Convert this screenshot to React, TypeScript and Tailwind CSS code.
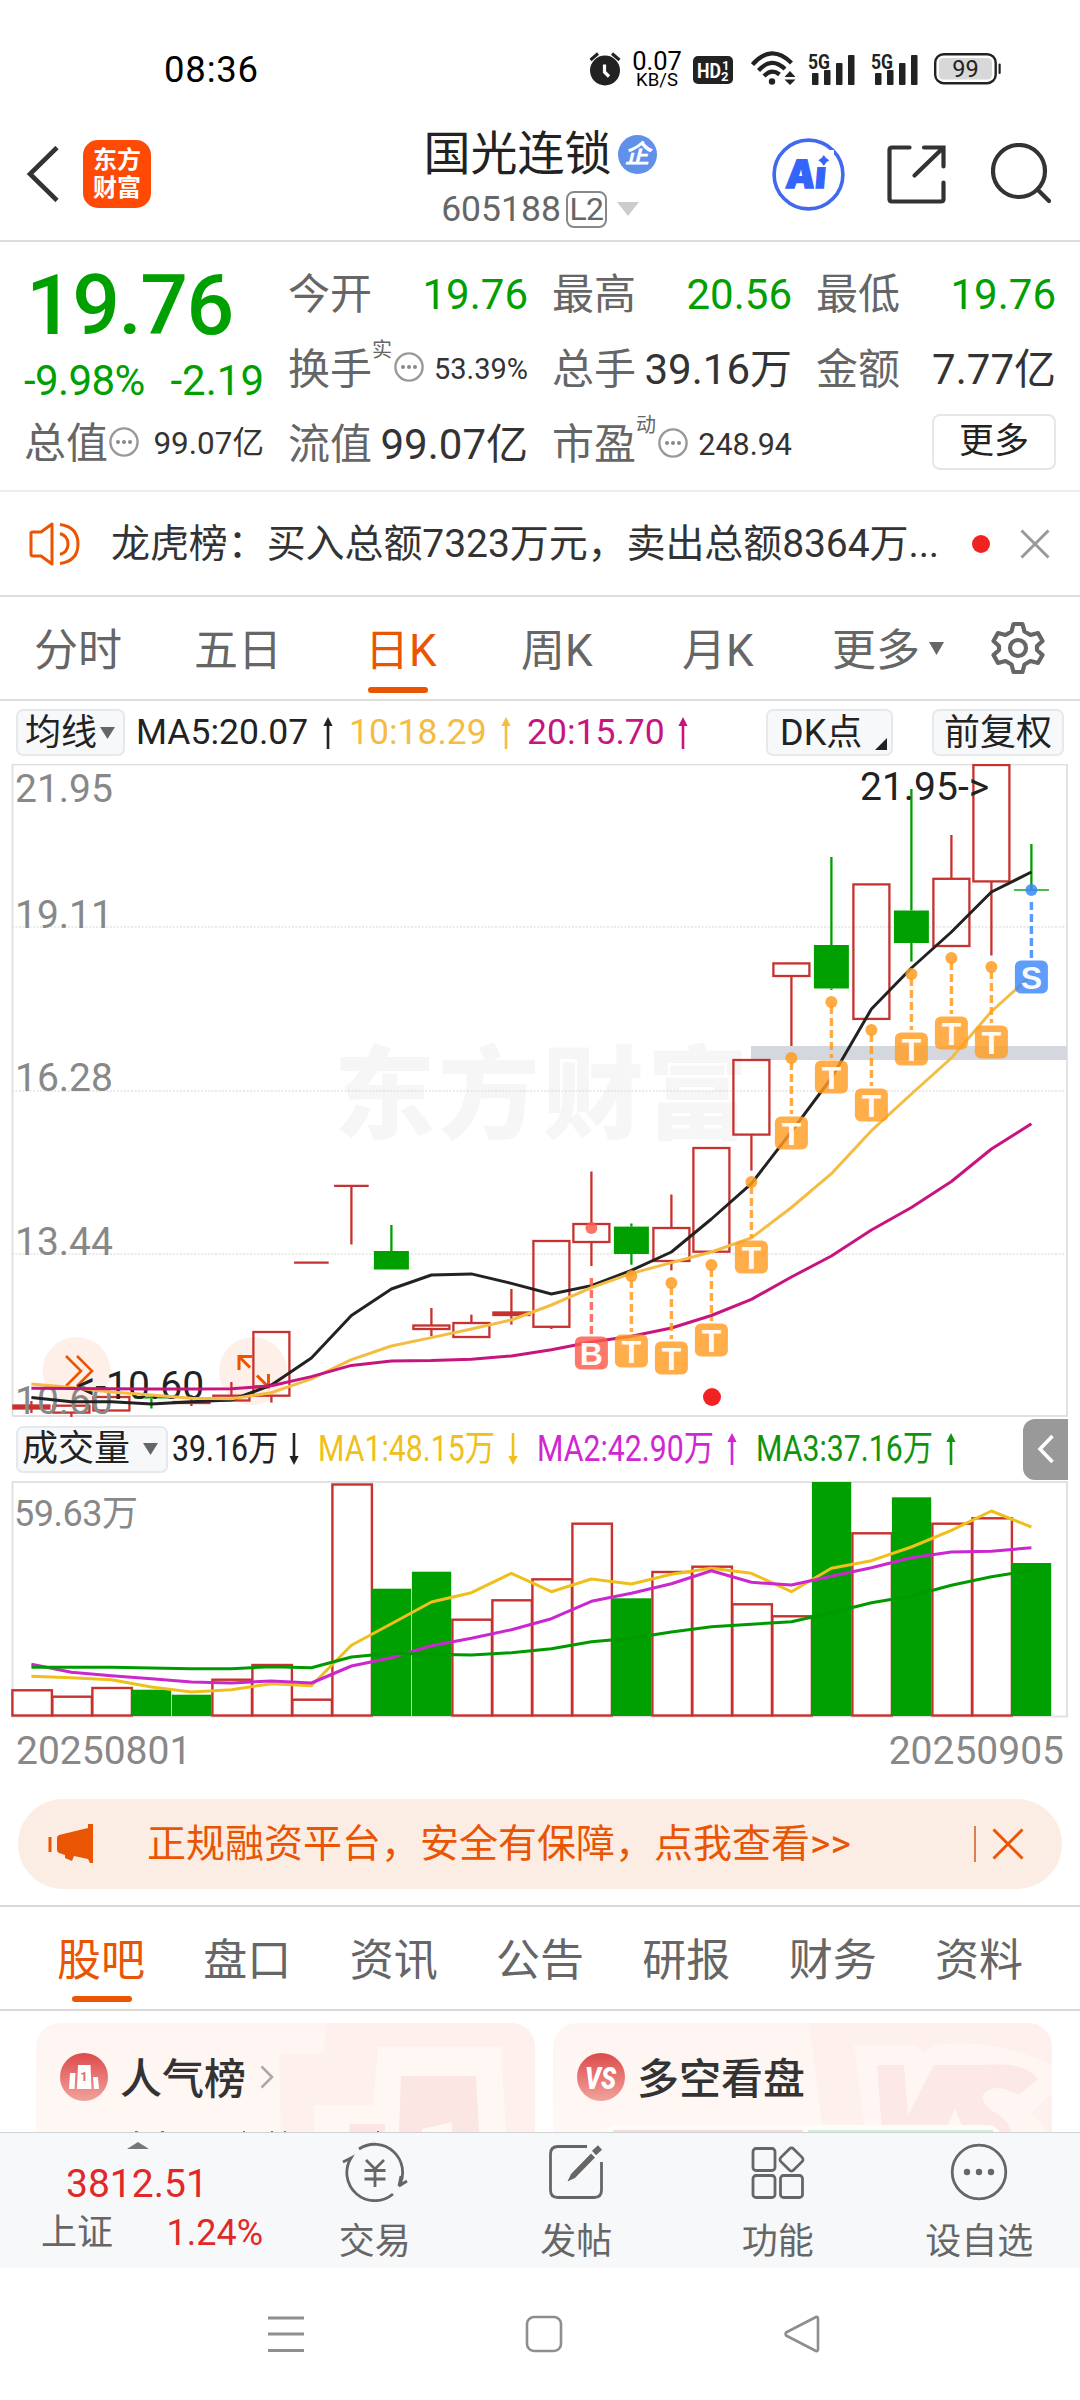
import React from "react";

const RED = "#c5322f";
const GREEN = "#00a000";
const ORANGE = "#ea5504";

const xAt = (i: number) => 31.4 + 40 * i;
const toPoints = (ys: number[]) => ys.map((y, i) => `${xAt(i).toFixed(1)},${y}`).join(" ");

/* ---------- data ---------- */

// [color, bodyTop, bodyBottom, wickTop, wickBottom]
type Candle = ["r" | "g", number, number, number, number];
const candles: Candle[] = [
  ["r", 1405.5, 1408.5, 1401, 1413],
  ["r", 1405.7, 1412.6, 1405.7, 1418],
  ["r", 1397, 1410.5, 1397, 1410.5],
  ["g", 1396.5, 1398.5, 1396, 1408.5],
  ["r", 1402, 1403, 1395, 1406],
  ["r", 1395.7, 1400.5, 1382, 1400.5],
  ["r", 1332, 1395.7, 1332, 1402.6],
  ["r", 1262.6, 1262.6, 1262.6, 1262.6],
  ["r", 1185.8, 1185.8, 1185.8, 1244.5],
  ["g", 1251, 1269.5, 1225, 1269.5],
  ["r", 1325.5, 1329, 1308, 1336],
  ["r", 1323, 1337, 1314.6, 1337],
  ["r", 1312.5, 1315, 1289, 1324.6],
  ["r", 1241, 1326.8, 1241, 1329],
  ["r", 1224, 1242, 1171.5, 1266],
  ["g", 1226.6, 1254, 1223.5, 1264.7],
  ["r", 1228, 1261, 1194.5, 1270.4],
  ["r", 1148, 1251.7, 1148, 1251.7],
  ["r", 1060, 1134.6, 1060, 1170.6],
  ["r", 963.4, 976, 963.4, 1046],
  ["g", 945, 988.5, 857, 990],
  ["r", 884.4, 1018.9, 884.4, 1018.9],
  ["g", 910.5, 943, 789, 961.6],
  ["r", 878.8, 946, 835, 946],
  ["r", 765, 881.4, 765, 955.5],
  ["g", 889.3, 890.7, 844, 890],
];

const ma5 = [1397.5, 1401.8, 1401.8, 1404, 1401.8, 1400, 1385, 1358, 1315.5, 1289, 1275, 1273.9, 1283.4, 1294, 1285.6, 1270.4, 1252, 1219, 1183.7, 1131.6, 1078, 1009, 968, 932, 892, 872];
const ma10 = [1384, 1387.5, 1392, 1395, 1398.3, 1398.7, 1392.7, 1378.8, 1359.7, 1346, 1337.6, 1329, 1320, 1305, 1287.7, 1273.4, 1262.6, 1252, 1237.9, 1207.5, 1173.7, 1130.7, 1094, 1058, 1011.5, 975.5];
const ma20 = [1388.3, 1388.5, 1388.7, 1389, 1389, 1388.8, 1385.7, 1376.6, 1365.4, 1361, 1360.6, 1359.3, 1356, 1349.7, 1342, 1336.3, 1328, 1315.5, 1299.4, 1277, 1256, 1230, 1207.5, 1181.5, 1149, 1123.8];

// [candle index, dot y]
const tMarks: [number, number][] = [
  [15, 1276], [16, 1283], [17, 1265], [18, 1182], [19, 1058],
  [20, 1002], [21, 1030], [22, 974], [23, 958], [24, 967],
];

const volumes: ["r" | "g", number][] = [
  ["r", 1689.3], ["r", 1695.7], ["r", 1687], ["g", 1688.7], ["g", 1693.7], ["r", 1678.7], ["r", 1664],
  ["r", 1698.7], ["r", 1483.5], ["g", 1587.7], ["g", 1570.7], ["r", 1618.7], ["r", 1599.3], ["r", 1578.3],
  ["r", 1522.7], ["g", 1597.3], ["r", 1571], ["r", 1565.7], ["r", 1603.3], ["r", 1615.3], ["g", 1481],
  ["r", 1532.3], ["g", 1496.3], ["r", 1522.7], ["r", 1517.3], ["g", 1562],
];
const volY = (v: number[]) => v.map((p) => Math.round((1410 + p / 3) * 10) / 10);
const v1 = volY([796, 800, 806, 828, 843, 836, 818, 824, 703, 638, 573, 545, 487, 542, 504, 519, 490, 472, 487, 542, 472, 449, 408, 358, 300, 348]);
const v2 = volY([760, 784, 794, 803, 813, 816, 810, 816, 765, 740, 704, 682, 656, 623, 571, 547, 518, 479, 514, 522, 496, 470, 440, 423, 421, 410]);
const v3 = volY([769, 769, 769, 771, 773, 773, 767, 770, 738, 727, 730, 732, 725, 713, 692, 682, 663, 647, 640, 632, 605, 575, 555, 523, 497, 478]);

/* ---------- small pieces ---------- */

function Arrow({ color, down = false, className = "" }: { color: string; down?: boolean; className?: string }) {
  return (
    <svg width="10" height="34" viewBox="0 0 10 34" className={`shrink-0 ${className}`}>
      <g transform={down ? "rotate(180 5 17)" : undefined}>
        <path d="M5 6V33" stroke={color} strokeWidth="2.6" />
        <path d="M5 1L9.6 10H0.4Z" fill={color} />
      </g>
    </svg>
  );
}

function Caret({ w, h, color, className = "" }: { w: number; h: number; color: string; className?: string }) {
  return (
    <svg width={w} height={h} viewBox="0 0 10 10" preserveAspectRatio="none" className={`shrink-0 ${className}`}>
      <path d="M0 0H10L5 10Z" fill={color} />
    </svg>
  );
}

function Hint({ className = "" }: { className?: string }) {
  return (
    <svg width="30" height="30" viewBox="0 0 30 30" className={`shrink-0 ${className}`}>
      <circle cx="15" cy="15" r="13.6" fill="none" stroke="#999" strokeWidth="2.4" />
      <g fill="#888">
        <circle cx="9" cy="15" r="2" />
        <circle cx="15" cy="15" r="2" />
        <circle cx="21" cy="15" r="2" />
      </g>
    </svg>
  );
}

function Signal() {
  return (
    <svg width="47" height="34" viewBox="0 0 47 34" className="shrink-0">
      <text x="0" y="17.5" fontSize="21" fontWeight="700" textLength="22" lengthAdjust="spacingAndGlyphs" fill="#222">5G</text>
      <g fill="#222">
        <rect x="4" y="22" width="6.5" height="12" rx="1" />
        <rect x="16" y="19" width="6.5" height="15" rx="1" />
        <rect x="28" y="12" width="6.5" height="22" rx="1" />
        <rect x="40" y="4" width="6.5" height="30" rx="1" />
      </g>
    </svg>
  );
}

/* ---------- sections ---------- */

function StatusBar() {
  return (
    <div className="flex h-[120px] shrink-0 items-start pl-[164px] pr-[78px]">
      <div className="mt-[50px] h-10 text-[36.5px] leading-10 tracking-[0.8px] text-black">08:36</div>
      <div className="mt-[50px] ml-auto flex h-9 items-start text-[#222]">
        <svg width="34" height="36" viewBox="0 0 34 36" className="shrink-0">
          <circle cx="17" cy="20.5" r="15" fill="#222" />
          <path d="M2.5 10L10 3.5M31.5 10L24 3.5" stroke="#222" strokeWidth="3" />
          <path d="M16.5 14.5V22L21 26.5" stroke="#fff" strokeWidth="3.2" fill="none" />
        </svg>
        <div className="ml-[9px] flex w-[52px] flex-col items-center text-black">
          <div className="h-[22px] text-[25.5px] leading-[22px]">0.07</div>
          <div className="h-[16px] text-[18.5px] leading-4">KB/S</div>
        </div>
        <svg width="40" height="28" viewBox="0 0 40 28" className="mt-[6px] ml-[10px] shrink-0">
          <rect width="40" height="28" rx="5" fill="#222" />
          <text x="4" y="21.5" fontSize="21" fontWeight="700" textLength="24" lengthAdjust="spacingAndGlyphs" fill="#fff">HD</text>
          <text x="29" y="13.5" fontSize="13" fontWeight="700" fill="#fff">1</text>
          <text x="28" y="25" fontSize="13" fontWeight="700" fill="#fff">2</text>
        </svg>
        <svg width="45" height="34" viewBox="0 0 45 34" className="mt-[1px] ml-[18px] shrink-0">
          <g fill="none" stroke="#222" strokeWidth="4.2">
            <path d="M1.5 13.5Q20.500 -8 40.500 12" />
            <path d="M7.500 19.500Q20.500 5 34 18" />
            <path d="M13 25Q20.500 17 28.500 23.500" />
          </g>
          <circle cx="21" cy="30.500" r="3.200" fill="#222" />
          <path d="M33.500 26L39 20L44.500 26ZM33.500 28.500L39 34L44.500 28.500Z" fill="#222" />
        </svg>
        <div className="mt-[1px] ml-[12px] flex gap-4">
          <Signal />
          <Signal />
        </div>
        <svg width="68" height="32" viewBox="0 0 68 32" className="mt-[3px] ml-[16px] shrink-0">
          <rect x="1.200" y="1.200" width="60.500" height="29" rx="8.500" fill="#fff" stroke="#222" strokeWidth="2.400" />
          <rect x="5" y="5" width="53" height="21.500" rx="4.500" fill="#d8d8d8" />
          <rect x="64.500" y="10.500" width="2.200" height="10.500" rx="1" fill="#222" />
          <text x="31.500" y="23.500" fontSize="23.500" textAnchor="middle" fill="#222">99</text>
        </svg>
      </div>
    </div>
  );
}

function Header() {
  return (
    <div className="grid h-[122px] shrink-0 grid-cols-3 items-center border-b-2 border-[#dcdcdc]">
      <div className="mt-[-12px] flex items-center pl-[26px]">
        <svg width="34" height="56" viewBox="0 0 34 56">
          <path d="M31 1.500L4 28L31 54.500" fill="none" stroke="#333" strokeWidth="4.600" />
        </svg>
        <div className="ml-[23px] flex h-[68px] w-[68px] flex-col items-center justify-center rounded-[15px] bg-[#ff4a05] text-[24px] font-bold leading-[28px] text-white">
          <span>东方</span>
          <span>财富</span>
        </div>
      </div>
      <div className="flex flex-col items-center">
        <div className="mt-[-1px] flex h-[60px] items-center text-[47px] leading-[60px] text-[#222]">
          <span>国光连锁</span>
          <span className="ml-[6px] flex h-[39px] w-[39px] items-center justify-center rounded-full bg-[#6090ea] text-[26px] font-bold italic leading-none text-white">企</span>
        </div>
        <div className="mt-[-1px] flex h-[52px] items-center text-[35.500px] leading-[52px] text-[#666]">
          <span>605188</span>
          <span className="ml-[5px] flex h-[37px] w-[41px] items-center justify-center rounded-[8px] border-2 border-[#888] text-[32px] leading-none tracking-tight">L2</span>
          <Caret w={22} h={14} color="#ccc" className="ml-[10px]" />
        </div>
      </div>
      <div className="mt-[-12px] flex items-center justify-end pr-[27px]">
        <svg width="73" height="73" viewBox="0 0 73 73">
          <circle cx="36.500" cy="36.500" r="34.400" fill="none" stroke="#4169ee" strokeWidth="3.600" />
          <g transform="skewX(-5)">
            <text x="17.500" y="50" fontSize="39" fontWeight="900" textLength="40" lengthAdjust="spacingAndGlyphs" fontFamily="Inter, Roboto, sans-serif" fill="#3465fa" stroke="#3465fa" strokeWidth="1.400">Ai</text>
          </g>
          <rect x="42" y="12" width="20" height="17" fill="#fff" />
          <path d="M51.800 17Q53.500 20.600 57.300 22.300Q53.500 24 51.800 27.800Q50 24 46.300 22.300Q50 20.600 51.800 17Z" fill="#3465fa" />
        </svg>
        <svg width="60" height="60" viewBox="0 0 60 60" className="ml-[42px]" fill="none" stroke="#333" strokeWidth="4.200" strokeLinecap="round">
          <path d="M22.500 3.500H5Q2.500 3.500 2.500 6V55Q2.500 57.500 5 57.500H54Q56.500 57.500 56.500 55V38.500" />
          <path d="M37 3.500H56.500V22.500M56 4L27.500 31.500" />
        </svg>
        <svg width="62" height="62" viewBox="0 0 62 62" className="ml-[44px]" fill="none" stroke="#333" strokeWidth="4.200" strokeLinecap="round">
          <circle cx="28" cy="28" r="26" />
          <path d="M46.500 46.500L58 58" />
        </svg>
      </div>
    </div>
  );
}

function Quote() {
  const label = "text-[42px] text-[#666]";
  return (
    <div className="grid h-[250px] shrink-0 grid-cols-[240px_240px_240px_240px] gap-x-6 border-b-2 border-[#ededed] px-6 pt-[15px] text-[42px] text-[#333]">
      <div className="flex flex-col text-[#00a000]">
        <div className="h-[98px] pl-[2px] text-[84px] font-medium leading-[98px] tracking-[-1.500px]">19.76</div>
        <div className="flex h-[51px] justify-between leading-[51px]">
          <span className="tracking-[-0.600px]">-9.98%</span>
          <span>-2.19</span>
        </div>
        <div className="flex h-[75px] items-center">
          <span className={label}>总值</span>
          <Hint className="ml-px mt-[-4px]" />
          <span className="ml-auto text-[31.500px] text-[#333]">99.07亿</span>
        </div>
      </div>
      <div>
        <div className="flex h-[75px] items-center justify-between">
          <span className={label}>今开</span>
          <span className="text-[#00a000]">19.76</span>
        </div>
        <div className="flex h-[75px] items-center">
          <span className={label}>换手</span>
          <span className="mt-[7px] self-start text-[20px] leading-[22px] text-[#666]">实</span>
          <Hint className="ml-[2px] mt-[-6px]" />
          <span className="ml-auto text-[29px]">53.39%</span>
        </div>
        <div className="flex h-[75px] items-center justify-between">
          <span className={label}>流值</span>
          <span>99.07亿</span>
        </div>
      </div>
      <div>
        <div className="flex h-[75px] items-center justify-between">
          <span className={label}>最高</span>
          <span className="text-[#00a000]">20.56</span>
        </div>
        <div className="flex h-[75px] items-center justify-between">
          <span className={label}>总手</span>
          <span>39.16万</span>
        </div>
        <div className="flex h-[75px] items-center">
          <span className={label}>市盈</span>
          <span className="mt-[7px] self-start text-[20px] leading-[22px] text-[#666]">动</span>
          <Hint className="ml-[2px] mt-[-4px]" />
          <span className="ml-auto text-[30.500px]">248.94</span>
        </div>
      </div>
      <div>
        <div className="flex h-[75px] items-center justify-between">
          <span className={label}>最低</span>
          <span className="text-[#00a000]">19.76</span>
        </div>
        <div className="flex h-[75px] items-center justify-between">
          <span className={label}>金额</span>
          <span>7.77亿</span>
        </div>
        <div className="flex h-[75px] items-center justify-end">
          <span className="mt-[-5px] flex h-[56px] w-[124px] items-center justify-center rounded-[8px] border-2 border-[#e6e6e6] text-[35px] text-[#222]">更多</span>
        </div>
      </div>
    </div>
  );
}

function Notice() {
  return (
    <div className="flex h-[105px] shrink-0 items-center border-b-2 border-[#dcdcdc] text-[39px] text-[#333]">
      <svg width="54" height="44" viewBox="0 0 54 44" className="ml-[29px] shrink-0" fill="none" stroke={ORANGE} strokeWidth="3">
        <path d="M2 11Q2 10 4 10H12L23 2V42L12 34H4Q2 34 2 32Z" strokeLinejoin="round" />
        <path d="M31 11.500Q39 14 39 22Q39 30 31 32.500M31 2.500Q49 5 49 22Q49 39 31 41.500" />
      </svg>
      <span className="ml-[28px] mt-px whitespace-nowrap tracking-[-0.080px]">龙虎榜：买入总额7323万元，卖出总额8364万...</span>
      <span className="ml-auto h-[18px] w-[18px] rounded-full bg-[#f22222]" />
      <svg width="30" height="30" viewBox="0 0 30 30" className="ml-[30px] mr-[30px] shrink-0">
        <path d="M1.500 1.500L28.500 28.500M28.500 1.500L1.500 28.500" stroke="#999" strokeWidth="3" />
      </svg>
    </div>
  );
}

function PeriodTabs() {
  return (
    <div className="flex h-[104px] shrink-0 items-center border-b-2 border-[#dcdcdc] pt-[6px] text-[44px] text-[#666]">
      <span className="ml-[34px] w-[160px]">分时</span>
      <span className="w-[171px]">五日</span>
      <span className="relative w-[156px] text-[#ea5504]">
        日K
        <span className="absolute bottom-[-9px] left-[3px] h-[6px] w-[60px] rounded-full bg-[#ea5504]" />
      </span>
      <span className="w-[161px]">周K</span>
      <span className="w-[150px]">月K</span>
      <span>更多</span>
      <Caret w={15} h={13} color="#666" className="ml-[9px] mt-[-6px]" />
      <svg width="54" height="54" viewBox="0 0 54 54" className="mt-[-6px] ml-auto mr-[35px]" fill="none" stroke="#666" strokeWidth="4.200">
        <path d="M22.500 3H31.500L33.500 10.500L39.500 14L47 12L51.500 20L46 25V29L51.500 34L47 42L39.500 40L33.500 43.500L31.500 51H22.500L20.500 43.500L14.500 40L7 42L2.500 34L8 29V25L2.500 20L7 12L14.500 14L20.500 10.500Z" strokeLinejoin="round" />
        <circle cx="27" cy="27" r="8" />
      </svg>
    </div>
  );
}

const chip = "flex items-center rounded-[7px] border-2 border-[#e6e8ec] bg-[#f7f8fa] text-[#222]";

function MaRow() {
  return (
    <div className="flex h-[63px] shrink-0 items-center whitespace-nowrap pr-[16px] text-[36px] leading-none">
      <div className={`${chip} ml-[16px] h-[47px] w-[109px] pl-[7px]`}>
        <span>均线</span>
        <Caret w={15} h={12} color="#666" className="ml-[3px]" />
      </div>
      <span className="ml-[11px] w-[174px] text-[35.500px] text-[#222]">MA5:20.07</span>
      <Arrow color="#222" className="ml-[13px]" />
      <span className="ml-[16px] w-[139px] text-[35.500px] text-[#f5bc42]">10:18.29</span>
      <Arrow color="#f5bc42" className="ml-[13px]" />
      <span className="ml-[16px] w-[139px] text-[35.500px] text-[#c7157f]">20:15.70</span>
      <Arrow color="#c7157f" className="ml-[12px]" />
      <div className={`${chip} relative ml-auto h-[47px] w-[127px] pl-[12px]`}>
        <span>DK点</span>
        <svg width="12" height="12" viewBox="0 0 12 12" className="absolute right-[4px] bottom-[4px]">
          <path d="M12 0V12H0Z" fill="#222" />
        </svg>
      </div>
      <div className={`${chip} ml-[39px] h-[47px] w-[132px] justify-center`}>前复权</div>
    </div>
  );
}

function Marker({ x, dotY, letter, color, dash }: { x: number; dotY: number; letter: string; color: string; dash?: [number, number] }) {
  const cy = letter === "S" ? 977 : letter === "B" ? 1353 : dotY + 75;
  const [a, b] = dash ?? [dotY + 4, cy - 19];
  return (
    <g>
      <path d={`M${x} ${a}V${b}`} stroke={color} strokeWidth="3.400" strokeDasharray="8 4" opacity="0.85" />
      <circle cx={x} cy={dotY} r="6" fill={color} opacity="0.85" />
      <rect x={x - 16.500} y={cy - 16.500} width="33" height="33" rx="6" fill={color} opacity="0.82" />
      <text x={x} y={cy + 11.500} fontSize="32" fontWeight="700" textAnchor="middle" fill="#fff" opacity="0.95" fontFamily="'Liberation Sans', Roboto, sans-serif">{letter}</text>
    </g>
  );
}

function PriceChart() {
  return (
    <svg width="1080" height="653" viewBox="0 764 1080 653" className="block shrink-0">
      <g fontSize="101" fontWeight="900" fill="#f6f6f6" fontFamily="'Noto Sans CJK SC', sans-serif">
        <text x="334" y="1131" textLength="414">东方财富</text>
      </g>
      <g stroke="#d6d6d6" strokeWidth="1.200" strokeDasharray="2 1.500">
        <path d="M12 927H1067M12 1091H1067M12 1254H1067" />
      </g>
      <rect x="12.500" y="764.500" width="1054.500" height="651.500" fill="none" stroke="#dfdfdf" strokeWidth="1.800" />
      <g>
        <circle cx="76.500" cy="1371" r="34" fill="#feefe8" />
        <path d="M66 1356L81 1371L66 1386M77 1356L92 1371L77 1386" fill="none" stroke={ORANGE} strokeWidth="2.600" />
        <circle cx="253" cy="1371" r="34" fill="#feefe8" />
      </g>
      <rect x="751" y="1046" width="316" height="14" fill="#d4d7dd" />
      {candles.map(([c, t, b, wt, wb], i) => {
        const x = xAt(i);
        const color = c === "r" ? RED : GREEN;
        const w = i === 25 || i === 7 || i === 8 ? 17.300 : 18;
        return (
          <g key={i} stroke={color} strokeWidth="2.300">
            {wt < t && <path d={`M${x} ${wt}V${t}`} />}
            {wb > b && <path d={`M${x} ${b}V${wb}`} />}
            {b - t < 1 ? (
              <path d={`M${x - w} ${t}H${x + w}`} />
            ) : c === "g" ? (
              <rect x={x - 17.500} y={t} width="35" height={b - t} fill={color} stroke="none" />
            ) : (
              <rect x={x - w} y={t} width={w * 2} height={b - t} fill={b - t < 3.200 ? color : "none"} />
            )}
          </g>
        );
      })}
      <g fill="none" stroke={ORANGE} strokeWidth="3">
        <path d="M239 1370V1356.500H252M240 1357.500L250 1367.500" />
        <path d="M268.500 1374V1387H255M267.500 1386L257 1375.500" />
      </g>
      <g fill="#888" fontSize="39">
        <text x="15" y="802">21.95</text>
        <text x="15" y="928">19.11</text>
        <text x="15" y="1091">16.28</text>
        <text x="15" y="1255">13.44</text>
        <text x="15" y="1414">10.60</text>
      </g>
      <g fontSize="39" fill="#222">
        <text x="75.500" y="1399">&lt;-10.60</text>
        <text x="860" y="800">21.95-&gt;</text>
      </g>
      <g fill="none" strokeWidth="3" strokeLinejoin="round">
        <polyline points={toPoints(ma5)} stroke="#222" />
        <polyline points={toPoints(ma10)} stroke="#f5bc42" />
        <polyline points={toPoints(ma20)} stroke="#c7157f" />
      </g>
      {tMarks.map(([i, y]) => (
        <Marker key={i} x={xAt(i)} dotY={y} letter="T" color="#ff9c22" />
      ))}
      <Marker x={xAt(14)} dotY={1228} letter="B" color="#fc5a4c" dash={[1278, 1334]} />
      <Marker x={xAt(25)} dotY={890} letter="S" color="#3b88f8" dash={[902, 958]} />
      <circle cx="712" cy="1397" r="9" fill="#f22222" />
    </svg>
  );
}

function VolItem({ text, color, down, cls }: { text: string; color: string; down?: boolean; cls: string }) {
  return (
    <>
      <span className={`${cls} shrink-0`} style={{ color }}>
        <span className="inline-block origin-left scale-x-[0.84]">{text}</span>
      </span>
      <Arrow color={color} down={down} />
    </>
  );
}

function VolumeRow() {
  return (
    <div className="flex h-[64px] shrink-0 items-center whitespace-nowrap text-[36px] leading-none">
      <div className={`${chip} ml-[16px] h-[47px] w-[152px] shrink-0 pl-[4px]`}>
        <span>成交量</span>
        <Caret w={15} h={12} color="#666" className="ml-[13px]" />
      </div>
      <VolItem text="39.16万" color="#222" down cls="ml-[4px] w-[117px]" />
      <VolItem text="MA1:48.15万" color="#f0bf1a" down cls="ml-[19px] w-[190px]" />
      <VolItem text="MA2:42.90万" color="#cf28d3" cls="ml-[19px] w-[190px]" />
      <VolItem text="MA3:37.16万" color="#109410" cls="ml-[19px] w-[190px]" />
      <div className="ml-auto mr-[12px] flex h-[61px] w-[45px] items-center justify-center rounded-l-[12px] bg-[#999]">
        <svg width="18" height="30" viewBox="0 0 18 30">
          <path d="M15.500 2L3 15L15.500 28" fill="none" stroke="#fff" strokeWidth="3.600" />
        </svg>
      </div>
    </div>
  );
}

function VolumeChart() {
  return (
    <svg width="1080" height="237" viewBox="0 1480 1080 237" className="block shrink-0">
      <rect x="12.500" y="1481" width="1054.500" height="234.500" fill="none" stroke="#dfdfdf" strokeWidth="1.800" />
      {volumes.map(([c, top], i) => {
        const x = xAt(i);
        return c === "g" ? (
          <rect key={i} x={x - 19.500} y={top} width="39.300" height={1715 - top} fill={GREEN} />
        ) : (
          <rect key={i} x={x - 19} y={top} width="39.500" height={1714.500 - top} fill="#fff" stroke={RED} strokeWidth="2.400" />
        );
      })}
      <text x="14" y="1524.500" fontSize="36" textLength="124" fill="#888">59.63万</text>
      <g fill="none" strokeWidth="3" strokeLinejoin="round">
        <polyline points={toPoints(v1)} stroke="#efc01c" />
        <polyline points={toPoints(v2)} stroke="#cb27cf" />
        <polyline points={toPoints(v3)} stroke="#009a00" />
      </g>
    </svg>
  );
}

function Banner() {
  return (
    <div className="mx-[18px] mt-[17px] flex h-[90px] shrink-0 items-center rounded-full bg-[#fcede4] text-[39px] text-[#ea5504]">
      <svg width="46" height="40" viewBox="0 0 46 40" className="ml-[30px] shrink-0" fill={ORANGE}>
        <rect x="0.500" y="13" width="3" height="15" />
        <path d="M9 14Q9 12 11 11L40 4V0H45V39H42L40 35L26 32L24 37L17 34V31L11 29Q9 28 9 26Z" />
      </svg>
      <span className="ml-[53px] mt-px whitespace-nowrap">正规融资平台，安全有保障，点我查看&gt;&gt;</span>
      <span className="ml-auto h-[36px] w-[2px] bg-[#d9824f]" />
      <svg width="32" height="32" viewBox="0 0 32 32" className="ml-[16px] mr-[38px] shrink-0">
        <path d="M1.500 1.500L30.500 30.500M30.500 1.500L1.500 30.500" stroke={ORANGE} strokeWidth="3" />
      </svg>
    </div>
  );
}

function SectionTabs() {
  const tabs = ["股吧", "盘口", "资讯", "公告", "研报", "财务", "资料"];
  return (
    <div className="mt-[16px] flex h-[106px] shrink-0 items-center justify-between border-y-2 border-[#d9d9d9] px-[57px] pt-[6px] text-[44px] text-[#666]">
      {tabs.map((t, i) => (
        <span key={t} className={i === 0 ? "relative text-[#ea5504]" : ""}>
          {t}
          {i === 0 && <span className="absolute bottom-[-8px] left-[15px] h-[6px] w-[60px] rounded-full bg-[#ea5504]" />}
        </span>
      ))}
    </div>
  );
}

function Cards() {
  return (
    <div className="flex h-[121px] shrink-0 justify-center gap-[18px] overflow-hidden pt-[12px] pl-2">
      <div className="relative h-[160px] w-[499px] overflow-hidden rounded-[24px] bg-linear-to-b from-[#fef5f2] to-[#fff9f6]">
        <svg width="499" height="109" viewBox="0 0 499 109" className="absolute top-0 left-0">
          <path d="M290 0H499V109H245L243 31H288Z" fill="#fdf0ed" />
          <path d="M278 82H337L342 24H465L470 109H278Z" fill="#fff7f4" />
          <path d="M365 53H440L443 109H363ZM314 101H349V109H313Z" fill="#fce6e4" />
          <path d="M386 106L416 99V109H386Z" fill="#fff7f4" />
          <path d="M99 108.500h3M125 108.500h3M207 108.500h2M235 108.500h2M248 108.500h2M341 108.500h2" stroke="#777" />
        </svg>
        <div className="relative flex h-[108px] items-center pl-6">
          <svg width="48" height="48" viewBox="0 0 48 48">
            <defs>
              <linearGradient id="badge" x1="0" y1="0" x2="0" y2="1">
                <stop offset="0" stopColor="#dc4b4b" />
                <stop offset="1" stopColor="#f1a29d" />
              </linearGradient>
            </defs>
            <circle cx="24" cy="24" r="24" fill="url(#badge)" />
            <path d="M10 20H15.500L14.500 36H9ZM18 12H30.500L31.500 36H17ZM33 24H38L39 36H34Z" fill="#fff" />
            <text x="24" y="28" fontSize="13" fontWeight="700" textAnchor="middle" fill="#e16a66">1</text>
          </svg>
          <span className="mt-[5px] ml-[12px] text-[42px] font-medium text-[#333]">人气榜</span>
          <svg width="14" height="24" viewBox="0 0 14 24" className="ml-[14px]">
            <path d="M1.500 1.500L12 12L1.500 22.500" fill="none" stroke="#aaa" strokeWidth="2.600" />
          </svg>
        </div>
      </div>
      <div className="relative h-[160px] w-[499px] overflow-hidden rounded-[24px] bg-linear-to-b from-[#fef5f2] to-[#fff9f6]">
        <svg width="499" height="109" viewBox="0 0 499 109" className="absolute top-0 left-0">
          <path d="M256 0H499V109H270Z" fill="#fdf0ed" />
          <path d="M301 22H363L372 30L382 22Q440 14 499 42V70L478 90Q490 98 492 109H312Z" fill="#fff6f3" />
          <path d="M324 42H351L355 92L381 42H430Q472 38 485 56L466 72Q440 58 430 72Q428 82 446 92Q456 99 458 109H412L402 86L391 109H329Z" fill="#fce8e7" />
          <rect x="50" y="102" width="399" height="30" rx="15" fill="#fffdfc" />
          <rect x="60" y="107" width="190" height="12" fill="#fadbd9" />
          <rect x="255" y="107" width="185" height="12" fill="#d6ecdc" />
        </svg>
        <div className="relative flex h-[108px] items-center pl-6">
          <svg width="48" height="48" viewBox="0 0 48 48">
            <circle cx="24" cy="24" r="24" fill="url(#badge)" />
            <text x="23.500" y="35.500" fontSize="32" fontWeight="900" fontStyle="italic" textAnchor="middle" textLength="31" lengthAdjust="spacingAndGlyphs" fill="#fff">VS</text>
          </svg>
          <span className="mt-[5px] ml-[12px] text-[42px] font-medium text-[#333]">多空看盘</span>
        </div>
      </div>
    </div>
  );
}

function NavItem({ label, children }: { label: string; children: React.ReactNode }) {
  return (
    <div className="flex flex-1 flex-col items-center pt-[9px]">
      <svg width="66" height="60" viewBox="-33 -30 66 60" fill="none" stroke="#666" strokeWidth="2.800">
        {children}
      </svg>
      <span className="mt-[18px] text-[36px] leading-[44px] text-[#666]">{label}</span>
    </div>
  );
}

function BottomNav() {
  return (
    <div className="flex h-[136px] shrink-0 border-t border-[#cfd2d6] bg-[#f7f8fa]">
      <div className="flex w-[274px] flex-col text-[#e02828]">
        <svg width="22" height="7" viewBox="0 0 22 7" className="mt-[9px] ml-[127px]">
          <path d="M0 7L11 0L22 7Z" fill="#777" />
        </svg>
        <div className="ml-[66px] mt-[11px] h-[48px] text-[39px] leading-[48px]">3812.51</div>
        <div className="mt-px flex h-[48px] items-center justify-between pl-[41px] pr-[11px] text-[36px] leading-[48px]">
          <span className="text-[#666]">上证</span>
          <span>1.24%</span>
        </div>
      </div>
      <div className="flex w-[806px]">
        <NavItem label="交易">
          <path d="M-16 -23A28 28 0 0 1 24 14L32 9" />
          <path d="M24 14L26 4" />
          <path d="M18 22A28 28 0 0 1 -24 -14L-32 -10" />
          <path d="M-9 -12L0 -3L9 -12M-10.500 -1.500H10.500M-10.500 7H10.500M0 -3V15" />
        </NavItem>
        <NavItem label="发帖">
          <path d="M11 -25.500H-18Q-25.500 -25.500 -25.500 -18V18Q-25.500 25.500 -18 25.500H18Q25.500 25.500 25.500 18V-10" />
          <path d="M-8.500 9.500L-5 2L15 -18.500L19 -14.500L-1 6Z" fill="#666" stroke="none" />
          <path d="M18 -19L24 -24.500" strokeWidth="6" />
        </NavItem>
        <NavItem label="功能">
          <rect x="-25" y="-23.500" width="22" height="22" rx="3" />
          <rect x="-25" y="3.500" width="22" height="22" rx="3" />
          <rect x="2.500" y="3.500" width="22" height="22" rx="3" />
          <rect x="4.500" y="-21.500" width="18" height="18" rx="3" transform="rotate(45 13.500 -12.500)" />
        </NavItem>
        <NavItem label="设自选">
          <circle r="26.800" />
          <g fill="#666" stroke="none">
            <circle cx="-12" r="3.200" />
            <circle r="3.200" />
            <circle cx="12" r="3.200" />
          </g>
        </NavItem>
      </div>
    </div>
  );
}

function SystemNav() {
  return (
    <div className="flex h-[132px] shrink-0 items-center justify-between pl-[267px] pr-[259px]">
      <svg width="38" height="38" viewBox="0 0 38 38" stroke="#8e8e8e" strokeWidth="3">
        <path d="M1 3H37M1 19H37M1 35.500H37" />
      </svg>
      <svg width="38" height="38" viewBox="0 0 38 38" fill="none" stroke="#8e8e8e" strokeWidth="2.600">
        <rect x="2" y="2" width="34" height="34" rx="7" />
      </svg>
      <svg width="38" height="38" viewBox="0 0 38 38" fill="none" stroke="#8e8e8e" strokeWidth="2.600" strokeLinejoin="round">
        <path d="M3 17.500Q2 19 3 20.500L33 36Q35 36.500 35 34V4Q35 1.500 33 2Z" />
      </svg>
    </div>
  );
}

export default function App() {
  return (
    <div className="flex h-[2400px] w-[1080px] flex-col overflow-hidden bg-white font-['Roboto','Noto_Sans_CJK_SC',sans-serif]">
      <StatusBar />
      <Header />
      <Quote />
      <Notice />
      <PeriodTabs />
      <MaRow />
      <PriceChart />
      <VolumeRow />
      <VolumeChart />
      <div className="flex h-[64px] shrink-0 items-center justify-between pt-[2px] pl-[16px] pr-[16px] text-[39px] leading-none text-[#888]">
        <span>20250801</span>
        <span>20250905</span>
      </div>
      <Banner />
      <SectionTabs />
      <Cards />
      <BottomNav />
      <SystemNav />
    </div>
  );
}
